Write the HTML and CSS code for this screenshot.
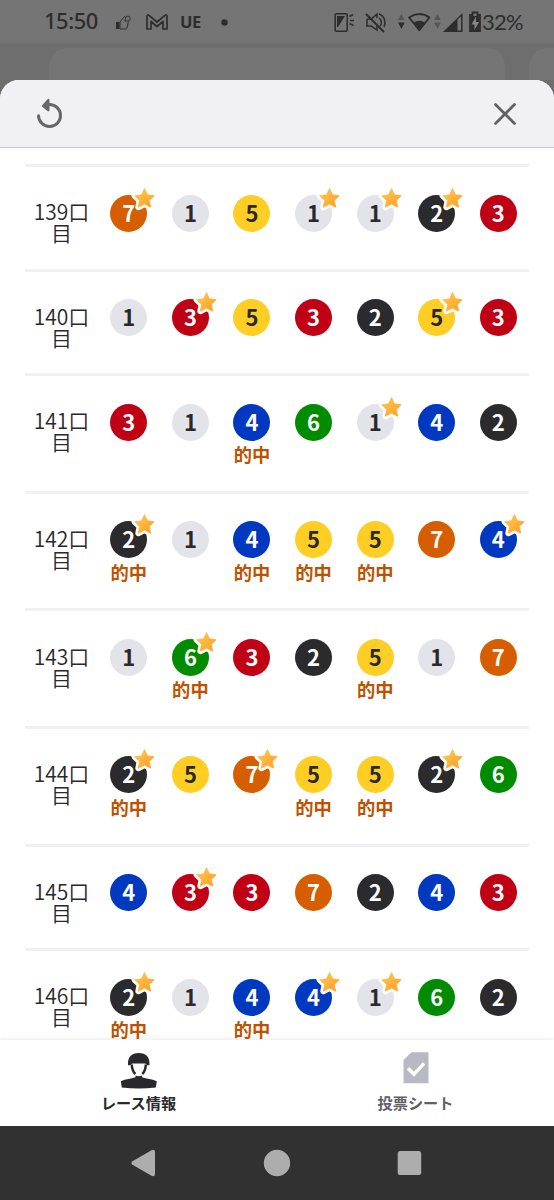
FILE: index.html
```html
<!DOCTYPE html>
<html lang="ja">
<head>
<meta charset="utf-8">
<title>レース情報</title>
<link rel="stylesheet" href="styles.css">
</head>
<body>
<div class="screen">
  <header class="backdrop">
    <div class="status">
      <span class="clock">15:50</span>
      <svg class="status-icons" width="110" height="26" viewBox="115 8 110 26">
        <path d="M116 21h3.500v7H116z" fill="#2d2d2d"/>
        <path d="M120 21l4-5c1-1 2 0 1.500 1.500l-.7 2.500h3.700l-1.500 7c-.3 1-1 1-2 1h-5zM126 17c-1-2 4-2.500 4-.5 1 2-1 4-2 3" fill="none" stroke="#333" stroke-width="1"/>
        <path d="M147 15c0-1 1-1.500 2-.7l8 6.700 8-6.700c1-.8 2-.3 2 .7V28h-4v-7.500l-6 5-6-5V28h-4z" fill="none" stroke="#2d2d2d" stroke-width="1.700" stroke-linejoin="round"/>
        <circle cx="224.500" cy="21.500" r="3.200" fill="#2d2d2d"/>
        <text class="ue" x="180" y="27">UE</text>
      </svg>
      <svg class="status-system" width="148" height="26" viewBox="333 8 148 26">
        <g fill="none" stroke="#2d2d2d" stroke-width="1.500">
          <rect x="335.200" y="12.800" width="12" height="17.400" rx="1"/>
          <path d="M349.500 15.500l3.500-2M350 19.500h4M349.500 22.500l4 2"/>
          <path d="M367 18h4l6-5v4M367 18v7h4l6 4v-4M379 17c3 2 3 7 1 8M379 13c6 2 7 9 5 13"/>
          <path d="M366 13l18 18" stroke-width="2"/>
          <path d="M409 16.500q10.500-7 20.500 0L419.300 29z" stroke-width="1.800" stroke-linejoin="round"/>
        </g>
        <path d="M337 15h8l-7 11h-1z" fill="#2d2d2d"/>
        <path d="M398 19l3.300-6 3.300 6zM434 19l3.400-6 3.300 6zM434 21.500h6.700l-3.300 6z" fill="#555"/>
        <path d="M398 21.500h6.700l-3.300 6.500zM413 22q6.500-4.500 12.500 0L419.300 30.500zM443 31l19.500-19v19z" fill="#2d2d2d"/>
        <path d="M457.500 18.500l3.500-3v14h-3.500z" fill="#777"/>
        <path d="M470 14h2.500v-2.500h5V14h2.500v16h-10z" fill="none" stroke="#2d2d2d" stroke-width="1.800"/>
        <path d="M471 15h8v14h-8z" fill="#2d2d2d"/>
        <path d="M476 15.500l-4.500 8h3v5.500l4.500-8h-3z" fill="#888"/>
      </svg>
      <span class="battery">32%</span>
    </div>
    <div class="cards"><div class="card"></div><div class="card"></div></div>
  </header>
  <main class="sheet">
    <div class="toolbar">
      <svg width="32" height="34" viewBox="0 0 32 34"><path d="M5.500 18.800A11 11 0 1 0 16.500 7.500" fill="none" stroke="#66676b" stroke-width="3" stroke-linecap="round"/><path d="M9.200 8.200L14.500 2.300q2-1.300 2 .7v10q0 2.300-2 1L9.200 9.800q-.8-.8 0-1.600z" fill="#66676b"/></svg>
      <svg width="26" height="26" viewBox="0 0 26 26"><path d="M3.500 3.500l19 19M22.500 3.500l-19 19" fill="none" stroke="#5f6064" stroke-width="2.700" stroke-linecap="round"/></svg>
    </div>
    <div class="list" id="list"></div>
    <nav class="tabs">
      <div class="tab active">
        <svg width="40" height="40" viewBox="0 0 40 40"><path d="M9 16C8.500 8 12.500 4 19.800 4S31 8 30.500 16q-1 .7-2.500 0-1-1.500-2-1.500H13.500q-1 0-2 1.500-1.500.7-2.500 0z" fill="#29292b"/><path d="M12.800 15.500c.1 4.500 1 7 3.500 9.500M26.800 15.500c-.1 4.500-1 7-3.500 9.500" fill="none" stroke="#29292b" stroke-width="2.500"/><path d="M16.500 26.500q3.300 1.500 6.600 0v1.800c4.500 1.500 9.500 1.700 14.700 4L36.800 38.500q-17 2-34 0l-1-6.200c5.200-2.300 10.200-2.500 14.700-4z" fill="#29292b"/></svg>
        <span>レース情報</span>
      </div>
      <div class="tab">
        <svg width="40" height="40" viewBox="0 0 40 40"><path d="M15.500 3.300H32.500v31H7.500V11z" fill="#b8b9c2"/><path d="M12 19.200l6 6 10-10.800" fill="none" stroke="#fff" stroke-width="3.400"/></svg>
        <span>投票シート</span>
      </div>
    </nav>
  </main>
  <footer class="system-nav">
    <svg width="554" height="74" viewBox="0 0 554 74" fill="#adadad"><path d="M132.500 35.200L151.500 24.200q3.500-1.500 3.500 1.800v22q0 3.300-3.500 1.800L132.500 38.800q-2.200-1.800 0-3.600z"/><circle cx="277" cy="37" r="13.200"/><rect x="397.700" y="25" width="23.500" height="24" rx="2.500"/></svg>
  </footer>
</div>
<script src="rows.js"></script>
</body>
</html>
```
FILE: styles.css
```css
* { box-sizing: border-box; }
body { margin: 0; background: #707070; font-family: "Noto Sans CJK JP", sans-serif; color: #29292b; }
.screen { height: 1200px; display: flex; flex-direction: column; overflow: hidden; background: #6e6e6e; }
.backdrop { flex: 0 0 80px; height: 80px; }
.status { height: 43px; background: #757575; display: flex; align-items: center; padding-left: 44px; color: #2d2d2d; }
.clock { width: 71px; font: 500 22px/42px "Noto Sans", sans-serif; letter-spacing: -.5px; padding-bottom: 3px; }
.status-icons { flex: none; overflow: visible; }
.status-system { flex: none; margin-left: 108px; }
.ue { font: bold 16.500px "Noto Sans", sans-serif; fill: #2d2d2d; letter-spacing: -.5px; }
.battery { font: 22px/42px Lato, sans-serif; margin-left: 1px; letter-spacing: -.7px; }
.cards { display: flex; gap: 24px; padding: 5px 0 0 49px; overflow: hidden; }
.card { flex: 0 0 456px; height: 52px; border-radius: 18px; background: #757575; margin-bottom: -20px; }
.sheet { flex: 0 0 1046px; height: 1046px; background: #fff; border-radius: 19px 19px 0 0; overflow: hidden; display: flex; flex-direction: column; position: relative; }
.toolbar { flex: 0 0 68px; background: #f0f0f5; border-bottom: 1px solid #c9c9cd; display: flex; align-items: center; justify-content: space-between; padding: 0 36px 0 33px; }
.list { flex: 1 1 0; min-height: 0; overflow: hidden; padding: 16px 25px 0; }
.row { height: 104.600px; border-top: 3px solid #f0f0f5; display: flex; padding-top: 27.500px; }
.row.hit { height: 117.600px; }
.name { width: 73px; flex: none; padding-top: 6.800px; font-size: 21px; line-height: 21px; font-weight: 350; text-align: center; }
.cells { display: grid; grid-template-columns: repeat(7, 61.600px); }
.cell { display: flex; flex-direction: column; align-items: center; }
.ball { position: relative; width: 37px; height: 37px; border-radius: 50%; font-size: 22px; line-height: 35px; font-weight: 700; text-align: center; color: #fff; }
.n1 { background: #e3e4ea; color: #29292b; }
.n2 { background: #2b2b2d; }
.n3 { background: #c00014; }
.n4 { background: #0038c0; }
.n5 { background: #ffce24; color: #29292b; }
.n6 { background: #008b00; }
.n7 { background: #d65e00; }
.star { position: absolute; left: 21px; top: -10px; }
.mark { font-size: 18.300px; line-height: 26px; font-weight: 700; color: #bd5200; margin-top: .5px; white-space: nowrap; }
.tabs { flex: 0 0 86px; display: grid; grid-template-columns: 1fr 1fr; background: #fff; box-shadow: 0 0 5px rgba(0,0,0,.12); position: relative; }
.tab { display: flex; flex-direction: column; align-items: center; padding-top: 9px; font-size: 15.200px; line-height: 22px; font-weight: 700; color: #606168; }
.tab span { margin-top: 1.500px; }
.active { color: #29292b; }
.system-nav { flex: 0 0 74px; background: #313131; }
```
FILE: rows.js
```js
// Each cell: number, then "s" for a star and "h" for a hit.
const rows = [
  ["139", "7s 1 5 1s 1s 2s 3"],
  ["140", "1 3s 5 3 2 5s 3"],
  ["141", "3 1 4h 6 1s 4 2"],
  ["142", "2sh 1 4h 5h 5h 7 4s"],
  ["143", "1 6sh 3 2 5h 1 7"],
  ["144", "2sh 5 7s 5h 5h 2s 6"],
  ["145", "4 3s 3 7 2 4 3"],
  ["146", "2sh 1 4h 4s 1s 6 2"]
];
const starPath = "M13.500 3.500l3 6.300 6.700 1-5 4.700 1.500 6.700-6.200-3.100-6.200 3.100 1.300-6.700-5-4.700 6.900-1z";
const star = `<svg class="star" width="27" height="27" viewBox="0 0 27 27"><defs><linearGradient id="gold" x2="1" y2="1"><stop stop-color="#ffcb55"/><stop offset="1" stop-color="#ff9b22"/></linearGradient></defs><path d="${starPath}" fill="#fff" stroke="#fff" stroke-width="6" stroke-linejoin="round"/><path d="${starPath}" fill="url(#gold)" stroke="url(#gold)" stroke-width=".8" stroke-linejoin="round"/></svg>`;
document.getElementById("list").innerHTML = rows.map(([name, data]) => {
  const cells = data.split(" ").map(c =>
    `<div class="cell"><div class="ball n${c[0]}">${c[0]}${c.includes("s") ? star : ""}</div>${c.includes("h") ? '<div class="mark">的中</div>' : ""}</div>`
  ).join("");
  return `<div class="row${data.includes("h") ? " hit" : ""}"><div class="name">${name}口<br>目</div><div class="cells">${cells}</div></div>`;
}).join("");
```
